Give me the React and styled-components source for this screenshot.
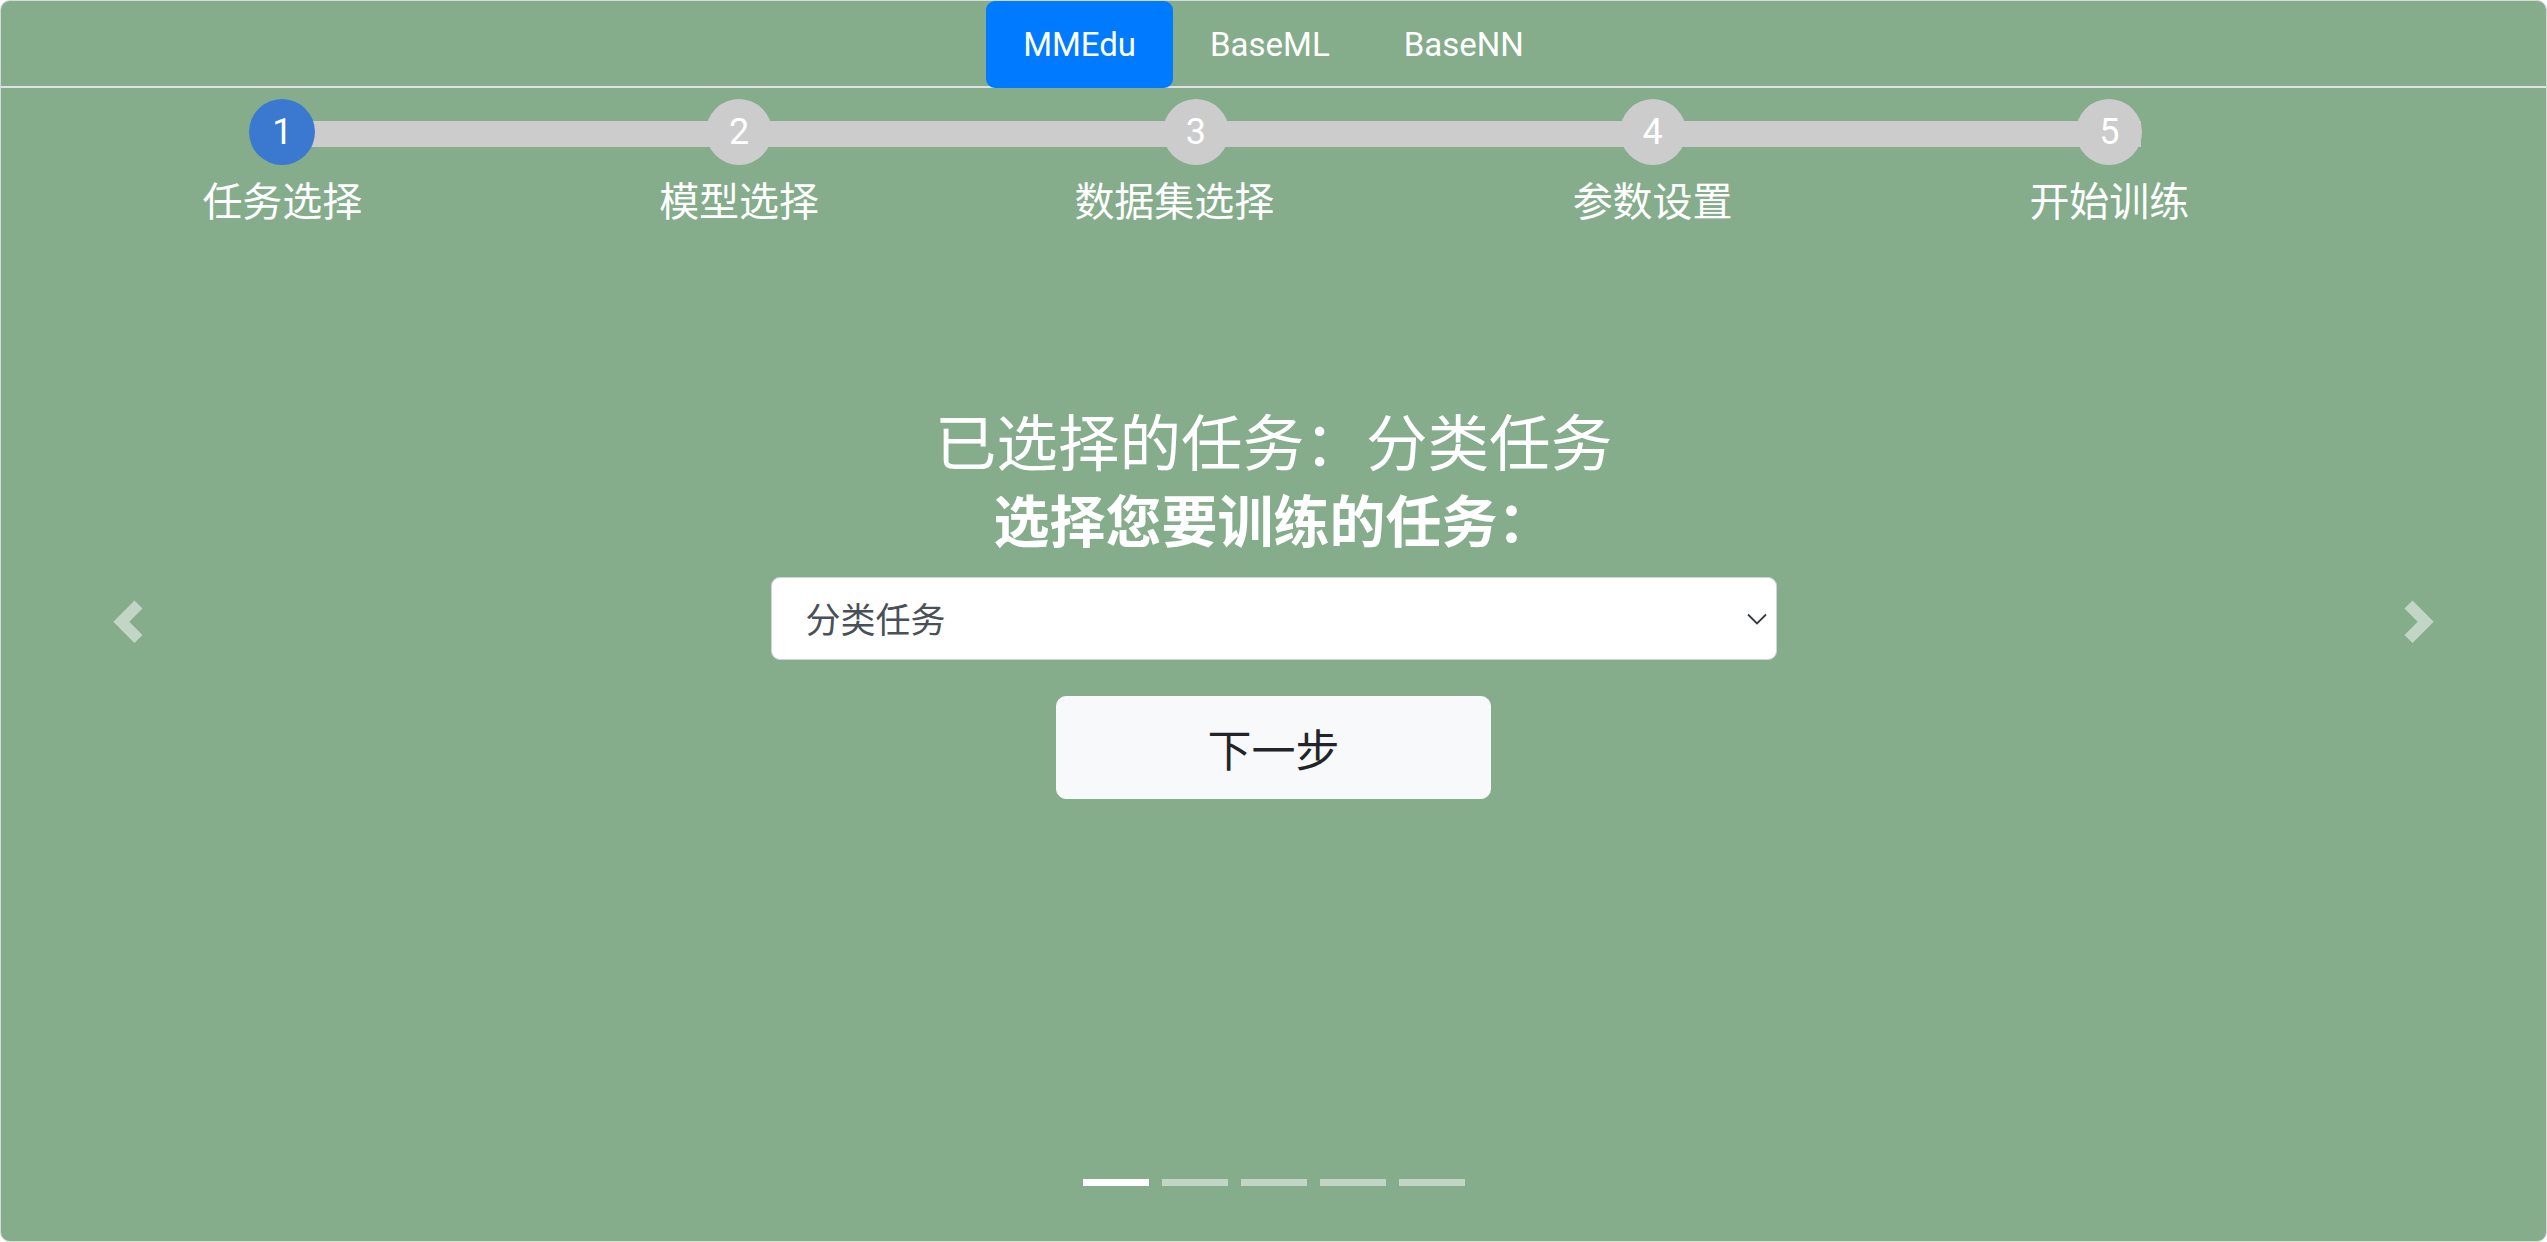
import React from "react";
import styled, { createGlobalStyle } from "styled-components";

const GlobalStyle = createGlobalStyle`
  html, body {
    margin: 0;
    padding: 0;
    background: #ffffff;
  }
  body {
    font-family: Roboto, "Noto Sans CJK SC", sans-serif;
  }
  * {
    box-sizing: border-box;
  }
`;

const tabs = ["MMEdu", "BaseML", "BaseNN"];
// shift: the long label sits a little left of its dot in the original
const steps = [
  { label: "任务选择", shift: 0 },
  { label: "模型选择", shift: 0 },
  { label: "数据集选择", shift: 43 },
  { label: "参数设置", shift: 0 },
  { label: "开始训练", shift: 0 },
];

const Chevron = ({ flip }) => (
  <svg
    width="40"
    height="50"
    viewBox="0 0 40 50"
    style={flip ? { transform: "scaleX(-1)" } : undefined}
  >
    <path
      d="M30.5 7.5 L13.3 24.8 L30.5 42.1"
      fill="none"
      stroke="rgba(255,255,255,0.5)"
      strokeWidth="11.3"
      strokeLinejoin="miter"
    />
  </svg>
);

const App = () => {
  return (
    <>
      <GlobalStyle />
      <Card>
        <Nav>
          {tabs.map((t, i) => (
            <Tab key={t} $active={i === 0}>
              {t}
            </Tab>
          ))}
        </Nav>
        <Carousel>
          <Control $side="left">
            <Chevron />
          </Control>
          <Slide>
            <Stepper>
              <Track />
              {steps.map((s, i) => (
                <Step key={s.label}>
                  <Dot $active={i === 0}>{i + 1}</Dot>
                  <StepLabel $shift={s.shift}>{s.label}</StepLabel>
                </Step>
              ))}
            </Stepper>
            <Content>
              <Title>已选择的任务：分类任务</Title>
              <Subtitle>选择您要训练的任务：</Subtitle>
              <SelectBox>
                <Select defaultValue="cls">
                  <option value="cls">分类任务</option>
                  <option value="det">检测任务</option>
                </Select>
                <SelectArrow width="20" height="12" viewBox="0 0 20 12">
                  <path
                    d="M1 1.5 L10 10.5 L19 1.5"
                    fill="none"
                    stroke="#343a40"
                    strokeWidth="1.8"
                  />
                </SelectArrow>
              </SelectBox>
              <NextButton>下一步</NextButton>
            </Content>
            <Indicators>
              {steps.map((s, i) => (
                <Indicator key={s.label} $active={i === 0} />
              ))}
            </Indicators>
          </Slide>
          <Control $side="right">
            <Chevron flip />
          </Control>
        </Carousel>
      </Card>
    </>
  );
};

export default App;

const Card = styled.div`
  width: 2547px;
  height: 1242px;
  display: flex;
  flex-direction: column;
  background-color: #85ad8c;
  border: 1px solid #d6dbd6;
  border-radius: 10px;
  overflow: hidden;
`;

const Nav = styled.div`
  display: flex;
  justify-content: center;
  height: 87px;
  border-bottom: 2px solid #dee2e6;
`;

const Tab = styled.a`
  display: flex;
  align-items: center;
  height: 87px;
  margin-bottom: -2px;
  padding: 0 37px;
  font-size: 33px;
  color: #ffffff;
  border-radius: 9px;
  cursor: pointer;
  background: ${(p) => (p.$active ? "#007bff" : "transparent")};
`;

const Carousel = styled.div`
  position: relative;
  flex: 1;
  display: flex;
`;

const Control = styled.div`
  position: absolute;
  top: 0;
  ${(p) => (p.$side === "left" ? "left: 0;" : "right: 0;")}
  width: 254px;
  height: 1067px;
  display: flex;
  align-items: center;
  justify-content: center;
  z-index: 2;
  cursor: pointer;
`;

const Slide = styled.div`
  flex: 1;
  display: flex;
  flex-direction: column;
`;

const Stepper = styled.div`
  position: relative;
  display: flex;
  width: 2284px;
  margin: 11px 0 0 53px;
`;

const Track = styled.div`
  position: absolute;
  top: 22px;
  left: 228px;
  width: 1859px;
  height: 26px;
  background: #cccccc;
`;

const Step = styled.div`
  position: relative;
  flex: none;
  width: 456.75px;
  display: flex;
  flex-direction: column;
  align-items: center;
`;

const Dot = styled.div`
  width: 66px;
  height: 66px;
  border-radius: 50%;
  display: flex;
  align-items: center;
  justify-content: center;
  font-size: 36px;
  color: #ffffff;
  background: ${(p) => (p.$active ? "#3b79d1" : "#cccccc")};
`;

const StepLabel = styled.div`
  margin-top: 14px;
  margin-right: ${(p) => p.$shift}px;
  font-size: 40px;
  line-height: 48px;
  color: #ffffff;
  white-space: nowrap;
`;

const Content = styled.div`
  display: flex;
  flex-direction: column;
  align-items: center;
  margin-top: 181px;
`;

const Title = styled.h3`
  margin: 0;
  font-size: 61.6px;
  line-height: 74px;
  font-weight: 400;
  color: #ffffff;
`;

const Subtitle = styled.h4`
  margin: 7px 0 0;
  font-size: 56px;
  line-height: 68px;
  font-weight: 700;
  color: #ffffff;
`;

const SelectBox = styled.div`
  position: relative;
  width: 1006px;
  margin-top: 20px;
`;

const Select = styled.select`
  width: 100%;
  height: 83px;
  appearance: none;
  border: 1px solid #ced4da;
  border-radius: 9px;
  background: #ffffff;
  padding: 5px 34px 0;
  font-family: inherit;
  font-size: 35px;
  color: #495057;
  outline: none;
`;

const SelectArrow = styled.svg`
  position: absolute;
  right: 10px;
  top: 36px;
  pointer-events: none;
`;

const NextButton = styled.button`
  margin-top: 36px;
  width: 435px;
  height: 103px;
  background: #f8f9fa;
  border: 1px solid #f8f9fa;
  border-radius: 10px;
  font-family: inherit;
  font-size: 44px;
  color: #212529;
  cursor: pointer;
`;

const Indicators = styled.div`
  display: flex;
  justify-content: center;
  gap: 13px;
  margin-top: auto;
  margin-bottom: 55px;
`;

const Indicator = styled.span`
  width: 66px;
  height: 7px;
  background: ${(p) => (p.$active ? "#ffffff" : "rgba(255,255,255,0.5)")};
`;
